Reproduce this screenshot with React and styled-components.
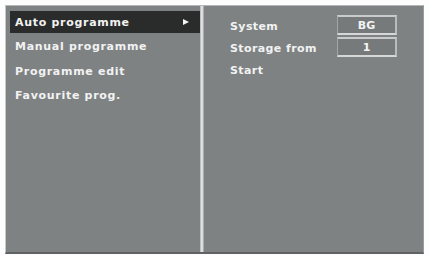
import React from "react";
import styled, { createGlobalStyle } from "styled-components";

const Global = createGlobalStyle`
  html, body {
    margin: 0;
    padding: 0;
    background: #fdfdfd;
  }
  body {
    font-family: "DejaVu Sans", "Liberation Sans", sans-serif;
  }
`;

const menuItems = [
  "Auto programme",
  "Manual programme",
  "Programme edit",
  "Favourite prog.",
];

const settings = [
  { label: "System", value: "BG" },
  { label: "Storage from", value: "1" },
  { label: "Start" },
];

const App = () => {
  return (
    <>
      <Global />
      <Screen>
        <Frame>
          <MenuPanel>
            {menuItems.map((item, i) => (
              <MenuItem key={item} active={i === 0}>
                <span>{item}</span>
                {i === 0 && <Arrow />}
              </MenuItem>
            ))}
          </MenuPanel>
          <Divider />
          <SettingsPanel>
            {settings.map((row) => (
              <SettingRow key={row.label}>
                <Label>{row.label}</Label>
                {row.value && <ValueBox>{row.value}</ValueBox>}
              </SettingRow>
            ))}
          </SettingsPanel>
        </Frame>
      </Screen>
    </>
  );
};

const Screen = styled.div`
  width: 429px;
  height: 256px;
  padding: 5px 5px 2px 5px;
  box-sizing: border-box;
`;

const Frame = styled.div`
  display: flex;
  width: 419px;
  height: 249px;
  background: #7e8283;
  border-top: 1px solid #b4b7b8;
  border-left: 1px solid #c6c8c9;
  border-right: 1px solid #9a9d9e;
  border-bottom: 2px solid #5f6364;
  box-sizing: border-box;
`;

const MenuPanel = styled.div`
  display: flex;
  flex-direction: column;
  gap: 2.5px;
  width: 194px;
  padding: 5px 0 0 4px;
  box-sizing: border-box;
`;

const MenuItem = styled.div`
  display: flex;
  align-items: center;
  justify-content: space-between;
  height: 22px;
  padding: 0 11px 0 5px;
  background: ${(p) => (p.active ? "#2a2b2b" : "transparent")};
  color: #f2f2f2;
  font-size: 11px;
  font-weight: bold;
  letter-spacing: 0.7px;
`;

const Arrow = styled.span`
  width: 0;
  height: 0;
  border-top: 3.5px solid transparent;
  border-bottom: 3.5px solid transparent;
  border-left: 6px solid #f4f4f4;
`;

const Divider = styled.div`
  width: 4px;
  background: linear-gradient(to right, #a9acad, #e6e7e7 40%, #d2d4d4 70%, #8f9394);
`;

const SettingsPanel = styled.div`
  display: flex;
  flex-direction: column;
  gap: 2px;
  flex: 1;
  padding: 9px 0 0 26px;
`;

const SettingRow = styled.div`
  display: grid;
  grid-template-columns: 107px 60px;
  align-items: center;
  height: 20px;
`;

const Label = styled.span`
  color: #f2f2f2;
  font-size: 11px;
  font-weight: bold;
  letter-spacing: 0.4px;
  padding-top: 3px;
`;

const ValueBox = styled.div`
  display: flex;
  align-items: center;
  justify-content: center;
  height: 20px;
  box-sizing: border-box;
  background: #767a7b;
  border-top: 2px solid #c9cbcc;
  border-bottom: 2px solid #d6d8d8;
  border-left: 1px solid #a3a6a7;
  border-right: 2px solid #b9bcbc;
  color: #f4f4f4;
  font-size: 11px;
  font-weight: bold;
`;

export default App;
